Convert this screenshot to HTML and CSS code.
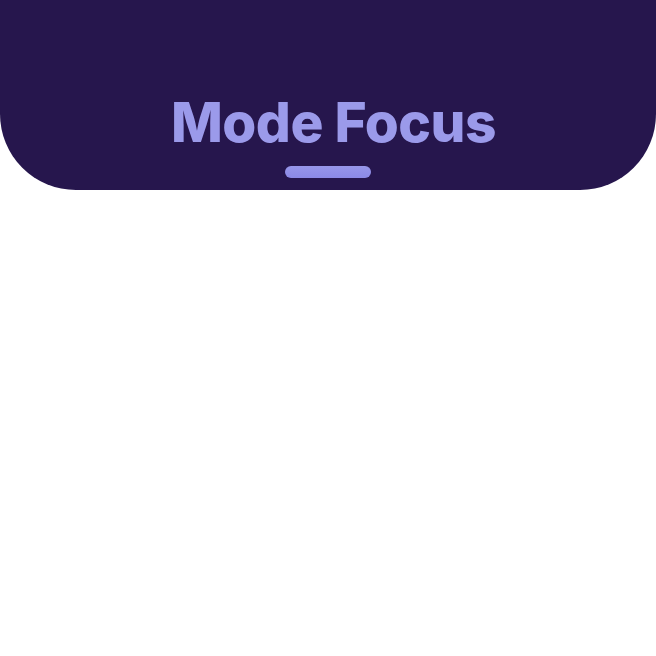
FILE: index.html
```html
<!DOCTYPE html>
<html>
<head>
<meta charset="utf-8">
<link rel="stylesheet" href="styles.css">
</head>
<body>
<header class="hero">
  <h1 class="title">Mode Focus</h1>
  <div class="pill"></div>
</header>
</body>
</html>
```
FILE: styles.css
```css
html, body {
  margin: 0;
  padding: 0;
  background: #ffffff;
}
.hero {
  height: 190px;
  background: #26164d;
  border-radius: 0 0 76px 76px;
  display: flex;
  flex-direction: column;
  align-items: center;
  justify-content: flex-end;
  box-sizing: border-box;
  padding-bottom: 12px;
}
.title {
  margin: 0 0 0 11px;
  font-family: Inter, "Noto Sans", sans-serif;
  font-weight: 800;
  font-size: 55px;
  letter-spacing: -0.5px;
  line-height: 56px;
  color: #9b9aea;
}
.pill {
  width: 86px;
  height: 12px;
  border-radius: 6px;
  margin-top: 16px;
  background: linear-gradient(180deg, #9796ea, #8b89e6);
}
```
